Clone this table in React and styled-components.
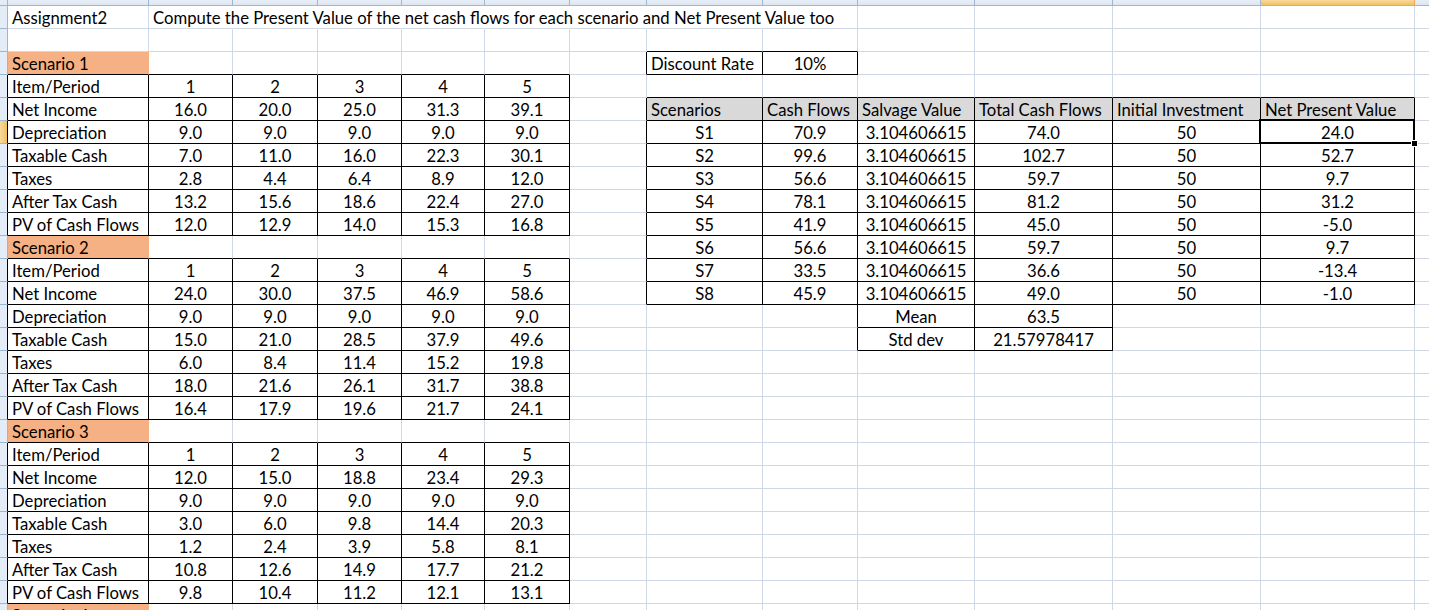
import React from "react";
import styled, { createGlobalStyle, css } from "styled-components";

const Global = createGlobalStyle`
  html, body { margin: 0; padding: 0; background: #fff; overflow: hidden; }
  body { font-family: Lato, "Open Sans", sans-serif; }
`;

const COL_WIDTHS = [8, 141, 84, 85, 84, 83, 85, 77, 116, 95, 117, 138, 148, 154, 120];
const GRID = "#d0d7e5";
const HEAD_LINE = "#9eb6ce";
const ORANGE = "#f5b183";
const GREY = "#d9d9d9";
const SELECTED_COL = 13; // M (index in COL_WIDTHS)
const SELECTED_ROW = 6;

const Sheet = styled.div`
  display: grid;
  grid-template-columns: ${COL_WIDTHS.map((w) => w + "px").join(" ")};
  grid-template-rows: 6px;
  grid-auto-rows: 23px;
  width: max-content;
  font-size: 16.7px;
  color: #000;
`;

const Corner = styled.div`
  box-sizing: border-box;
  background: #e4ecf7;
  border-right: 1px solid ${HEAD_LINE};
  border-bottom: 1px solid ${HEAD_LINE};
`;

const ColHead = styled.div`
  box-sizing: border-box;
  background: ${(p) =>
    p.$active
      ? "linear-gradient(#f9d99f, #f1c15f)"
      : "linear-gradient(#e8eef7, #dde6f2)"};
  border-right: 1px solid ${(p) => (p.$active ? "#f2a84a" : HEAD_LINE)};
  border-bottom: 1px solid ${(p) => (p.$active ? "#f2a84a" : HEAD_LINE)};
`;

const RowHead = styled.div`
  box-sizing: border-box;
  background: ${(p) =>
    p.$active ? "linear-gradient(90deg, #f9d99f, #f1c15f)" : "#e4ecf7"};
  border-right: 1px solid ${(p) => p.$right};
  border-bottom: 1px solid ${(p) => (p.$active ? "#f2a84a" : HEAD_LINE)};
`;

const Cell = styled.div`
  box-sizing: border-box;
  position: relative;
  display: flex;
  align-items: center;
  padding: 1px 2px 0 4px;
  white-space: nowrap;
  overflow: ${(p) => (p.$spill ? "visible" : "hidden")};
  background: ${(p) => p.$fill || "transparent"};
  border-right: 1px solid ${(p) => p.$rb};
  border-bottom: 1px solid ${(p) => p.$bb};
  justify-content: ${(p) =>
    p.$align === "c" ? "center" : p.$align === "r" ? "flex-end" : "flex-start"};
  ${(p) =>
    p.$align === "c" &&
    css`
      padding-left: 1px;
      padding-right: 1px;
    `}
`;

const Selection = styled.div`
  position: absolute;
  left: -2px;
  top: -2px;
  right: -1px;
  bottom: -1px;
  border: 2px solid #000;
  pointer-events: none;
  z-index: 2;
`;

const FillHandle = styled.div`
  position: absolute;
  right: -5px;
  bottom: -5px;
  width: 5px;
  height: 5px;
  background: #000;
  border: 1px solid #fff;
`;

/* ---------- data ---------- */
const NCOLS = COL_WIDTHS.length - 1; // data columns A..N
const emptyRow = () => Array.from({ length: NCOLS }, () => null);

const scenarios = [
  {
    name: "Scenario 1",
    rows: [
      ["Net Income", ["16.0", "20.0", "25.0", "31.3", "39.1"]],
      ["Depreciation", ["9.0", "9.0", "9.0", "9.0", "9.0"]],
      ["Taxable Cash", ["7.0", "11.0", "16.0", "22.3", "30.1"]],
      ["Taxes", ["2.8", "4.4", "6.4", "8.9", "12.0"]],
      ["After Tax Cash", ["13.2", "15.6", "18.6", "22.4", "27.0"]],
      ["PV of Cash Flows", ["12.0", "12.9", "14.0", "15.3", "16.8"]],
    ],
  },
  {
    name: "Scenario 2",
    rows: [
      ["Net Income", ["24.0", "30.0", "37.5", "46.9", "58.6"]],
      ["Depreciation", ["9.0", "9.0", "9.0", "9.0", "9.0"]],
      ["Taxable Cash", ["15.0", "21.0", "28.5", "37.9", "49.6"]],
      ["Taxes", ["6.0", "8.4", "11.4", "15.2", "19.8"]],
      ["After Tax Cash", ["18.0", "21.6", "26.1", "31.7", "38.8"]],
      ["PV of Cash Flows", ["16.4", "17.9", "19.6", "21.7", "24.1"]],
    ],
  },
  {
    name: "Scenario 3",
    rows: [
      ["Net Income", ["12.0", "15.0", "18.8", "23.4", "29.3"]],
      ["Depreciation", ["9.0", "9.0", "9.0", "9.0", "9.0"]],
      ["Taxable Cash", ["3.0", "6.0", "9.8", "14.4", "20.3"]],
      ["Taxes", ["1.2", "2.4", "3.9", "5.8", "8.1"]],
      ["After Tax Cash", ["10.8", "12.6", "14.9", "17.7", "21.2"]],
      ["PV of Cash Flows", ["9.8", "10.4", "11.2", "12.1", "13.1"]],
    ],
  },
  { name: "Scenario 4", rows: [] },
];

const npv = [
  ["S1", "70.9", "74.0", "24.0"],
  ["S2", "99.6", "102.7", "52.7"],
  ["S3", "56.6", "59.7", "9.7"],
  ["S4", "78.1", "81.2", "31.2"],
  ["S5", "41.9", "45.0", "-5.0"],
  ["S6", "56.6", "59.7", "9.7"],
  ["S7", "33.5", "36.6", "-13.4"],
  ["S8", "45.9", "49.0", "-1.0"],
];

function buildRows() {
  const rows = [];
  const r1 = emptyRow();
  r1[0] = { t: "Assignment2" };
  r1[1] = {
    t: "Compute the Present Value of the net cash flows for each scenario and Net Present Value too",
    spill: true,
  };
  for (let c = 1; c <= 7; c++) {
    r1[c] = { ...(r1[c] || {}), noRight: true };
  }
  rows.push(r1);
  rows.push(emptyRow());

  scenarios.forEach((s) => {
    const head = emptyRow();
    head[0] = { t: s.name, f: ORANGE };
    rows.push(head);
    if (!s.rows.length) return;
    const per = emptyRow();
    per[0] = { t: "Item/Period", b: true };
    [1, 2, 3, 4, 5].forEach((n, i) => (per[i + 1] = { t: String(n), a: "c", b: true }));
    rows.push(per);
    s.rows.forEach(([label, vals]) => {
      const r = emptyRow();
      r[0] = { t: label, b: true };
      vals.forEach((v, i) => (r[i + 1] = { t: v, a: "c", b: true }));
      rows.push(r);
    });
  });

  // right side (row numbers are 1-based; index = row - 1)
  const set = (row, col, cell) => {
    rows[row - 1][col] = cell;
  };
  set(3, 7, { t: "Discount Rate", b: true });
  set(3, 8, { t: "10%", a: "c", b: true });
  ["Scenarios", "Cash Flows", "Salvage Value", "Total Cash Flows", "Initial Investment", "Net Present Value"].forEach(
    (h, i) => set(5, 7 + i, { t: h, b: true, f: GREY })
  );
  npv.forEach(([s, cf, tot, nv], i) => {
    const row = 6 + i;
    set(row, 7, { t: s, a: "c", b: true });
    set(row, 8, { t: cf, a: "c", b: true });
    set(row, 9, { t: "3.104606615", a: "c", b: true });
    set(row, 10, { t: tot, a: "c", b: true });
    set(row, 11, { t: "50", a: "c", b: true });
    set(row, 12, { t: nv, a: "c", b: true });
  });
  set(14, 9, { t: "Mean", a: "c", b: true });
  set(14, 10, { t: "63.5", a: "c", b: true });
  set(15, 9, { t: "Std dev", a: "c", b: true });
  set(15, 10, { t: "21.57978417", a: "c", b: true });
  return rows;
}

const ROWS = buildRows();

const isB = (r, c) => !!(ROWS[r] && ROWS[r][c] && ROWS[r][c].b);

export default function App() {
  const out = [];
  out.push(<Corner key="corner" />);
  for (let c = 0; c < NCOLS; c++) {
    out.push(<ColHead key={"h" + c} $active={c + 1 === SELECTED_COL} />);
  }
  ROWS.forEach((row, r) => {
    const rowNo = r + 1;
    out.push(
      <RowHead
        key={"rh" + r}
        $active={rowNo === SELECTED_ROW}
        $right={isB(r, 0) ? "#000" : HEAD_LINE}
      />
    );
    row.forEach((cell, c) => {
      const cc = cell || {};
      const black = "#000";
      let rb = isB(r, c) || isB(r, c + 1) ? black : cc.f && !cc.b ? cc.f : GRID;
      if (cc.noRight) rb = "transparent";
      const bb = isB(r, c) || isB(r + 1, c) ? black : GRID;
      const selected = rowNo === SELECTED_ROW && c + 1 === SELECTED_COL;
      out.push(
        <Cell
          key={r + "-" + c}
          $rb={rb}
          $bb={bb}
          $fill={cc.f}
          $align={cc.a}
          $spill={cc.spill || selected}
        >
          {cc.t}
          {selected && (
            <Selection>
              <FillHandle />
            </Selection>
          )}
        </Cell>
      );
    });
  });
  return (
    <>
      <Global />
      <Sheet>{out}</Sheet>
    </>
  );
}
